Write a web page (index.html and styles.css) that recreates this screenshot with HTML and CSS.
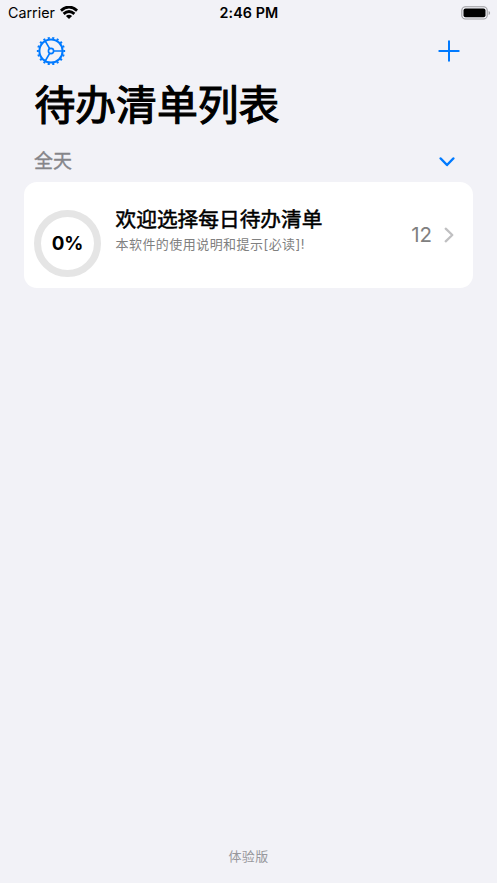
FILE: index.html
```html
<!DOCTYPE html>
<html lang="zh-CN">
<head>
<meta charset="utf-8">
<meta name="viewport" content="width=device-width, initial-scale=1">
<title>待办清单列表</title>
<link rel="stylesheet" href="styles.css">
</head>
<body>
<div class="screen">
  <div class="status">
    <div class="carrier">
      <span>Carrier</span>
      <svg class="wifi" width="18" height="14" viewBox="0 0 18 14" fill="none" stroke="#000" stroke-width="2.9">
        <path d="M.9 4.6Q9-2.4 17.1 4.6M3.6 7.8Q9 3.4 14.4 7.8"/>
        <path d="M5.9 9.9Q9 7.5 12.1 9.9L9 12.9Z" fill="#000" stroke="none"/>
      </svg>
    </div>
    <time class="clock">2:46 PM</time>
    <svg class="battery" width="30" height="14" viewBox="0 0 30 14">
      <rect x=".8" y=".8" width="25.4" height="12.2" rx="3.6" fill="none" stroke="#9c9ca0" stroke-width="1.1"/>
      <rect x="2.5" y="2.5" width="22" height="8.8" rx="2" fill="#000"/>
      <path d="M27.6 5q1.5.6 1.5 2t-1.5 2z" fill="#9c9ca0"/>
    </svg>
  </div>
  <nav class="toolbar">
    <svg width="30" height="30" viewBox="-15 -15 30 30" fill="none" stroke="#007aff">
      <circle r="11.6" stroke-width="2"/>
      <circle r="13.2" stroke-width="1.9" pathLength="180" stroke-dasharray="4.6 5.4" stroke-dashoffset="2.3"/>
      <circle r="2.6" stroke-width="1.6"/>
      <path d="M3 0H11M-1.5-2.6L-5.7-9.9M-1.5 2.6L-5.7 9.9" stroke-width="1.7"/>
    </svg>
    <svg width="22" height="22" viewBox="0 0 22 22" stroke="#007aff" stroke-width="2" stroke-linecap="round">
      <path d="M11 1.3V20.7M1.3 11H20.7"/>
    </svg>
  </nav>
  <h1 class="title">待办清单列表</h1>
  <section>
    <header class="section-head">
      <h2>全天</h2>
      <svg width="16" height="10" viewBox="0 0 16 10" fill="none" stroke="#007aff" stroke-width="2.5" stroke-linecap="round" stroke-linejoin="round">
        <path d="M1.7 1.5L8 8L14.3 1.5"/>
      </svg>
    </header>
    <article class="card">
      <div class="ring">0%</div>
      <div class="info">
        <h3>欢迎选择每日待办清单</h3>
        <p>本软件的使用说明和提示[必读]!</p>
      </div>
      <span class="count">12</span>
      <svg class="more" width="10" height="16" viewBox="0 0 10 16" fill="none" stroke="#c0c0c2" stroke-width="2.3" stroke-linecap="round" stroke-linejoin="round">
        <path d="M1.7 1.7L8.3 8L1.7 14.3"/>
      </svg>
    </article>
  </section>
  <footer class="footer">体验版</footer>
</div>
</body>
</html>
```
FILE: styles.css
```css
* { box-sizing: border-box; }
body, h1, h2, h3, p { margin: 0; }
body {
  background: #f2f2f7;
  color: #000;
  font-family: Inter, "Noto Sans CJK SC", sans-serif;
}
.screen {
  height: 883px;
  display: flex;
  flex-direction: column;
  overflow: hidden;
}
.status {
  height: 26px;
  padding: 0 6px 0 8px;
  display: grid;
  grid-template-columns: 1fr auto 1fr;
  align-items: center;
  font-size: 14.3px;
  line-height: 26px;
}
.carrier { display: flex; align-items: center; gap: 5px; }
.clock { font-weight: 600; letter-spacing: 0.1px; margin-right: 1px; }
.battery { justify-self: end; }
.toolbar {
  height: 47px;
  padding: 3px 37px 0 36px;
  display: flex;
  align-items: center;
  justify-content: space-between;
}
.title {
  height: 60px;
  padding-left: 34.5px;
  font-family: "Noto Sans CJK SC", sans-serif;
  font-size: 40.8px;
  line-height: 60px;
  font-weight: 400;
  -webkit-text-stroke: 1.15px #000;
}
.section-head {
  height: 49px;
  padding: 8px 42px 0 34px;
  display: flex;
  align-items: center;
  justify-content: space-between;
}
.section-head h2 {
  color: #858589;
  font-size: 19px;
  line-height: 30px;
  font-weight: 400;
  -webkit-text-stroke: 0.35px #858589;
}
.card {
  height: 106px;
  margin: 0 24px;
  padding: 0 19px 0 10px;
  display: flex;
  align-items: center;
  background: #fff;
  border-radius: 13px;
}
.ring {
  width: 67px;
  height: 67px;
  margin-top: 16px;
  border: 7px solid #e5e5e5;
  border-radius: 50%;
  display: flex;
  align-items: center;
  justify-content: center;
  font-size: 18.8px;
  font-weight: 700;
}
.info { flex: 1; padding-left: 14.5px; margin-top: -9px; }
.info h3 {
  font-size: 20.7px;
  line-height: 28px;
  font-weight: 400;
  -webkit-text-stroke: 0.5px #000;
  white-space: nowrap;
}
.info p {
  color: #808080;
  font-size: 13px;
  line-height: 21px;
  letter-spacing: 0.45px;
  white-space: nowrap;
}
.count { color: #808080; font-size: 20.5px; margin-top: -2px; }
.more { margin-left: 12px; }
.footer {
  margin-top: auto;
  padding-bottom: 17px;
  color: #98989c;
  font-size: 13px;
  line-height: 20px;
  letter-spacing: 0.4px;
  text-align: center;
}
```
